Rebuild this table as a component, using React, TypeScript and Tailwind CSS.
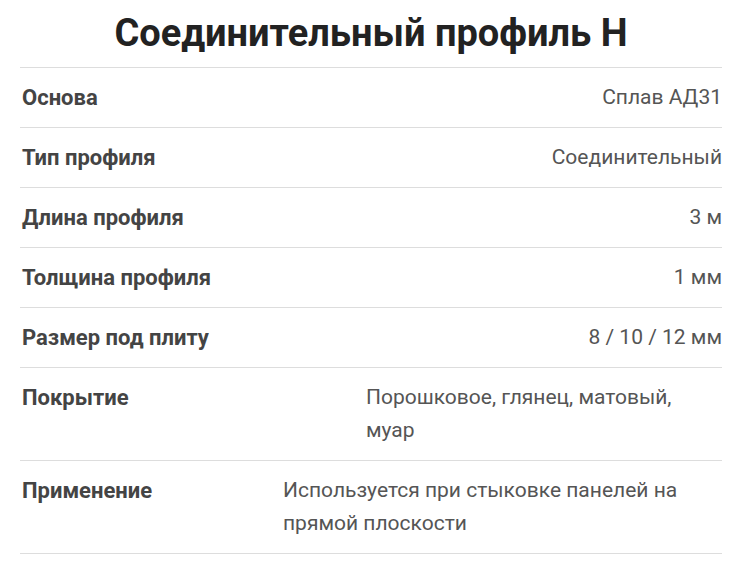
const rows: { label: string; value: string; width?: string }[] = [
  { label: 'Основа', value: 'Сплав АД31' },
  { label: 'Тип профиля', value: 'Соединительный' },
  { label: 'Длина профиля', value: '3 м' },
  { label: 'Толщина профиля', value: '1 мм' },
  { label: 'Размер под плиту', value: '8 / 10 / 12 мм' },
  { label: 'Покрытие', value: 'Порошковое, глянец, матовый, муар', width: 'w-[356px]' },
  { label: 'Применение', value: 'Используется при стыковке панелей на прямой плоскости', width: 'w-[439px]' },
];

export default function App() {
  return (
    <div className="min-h-screen bg-white pl-[20px] pr-[31px] font-['Roboto',sans-serif]">
      <h1 className="pt-[11px] pb-[12px] text-center text-[38px] leading-[44px] font-bold text-[#222]">
        Соединительный профиль Н
      </h1>
      <div className="border-b border-[#dddddd]">
        {rows.map((r) => (
          <div
            key={r.label}
            className="flex justify-between gap-4 border-t border-[#dddddd] py-[13px] text-[21px] leading-[33px]"
          >
            <div className="shrink-0 pl-[2px] text-[22px] font-bold text-[#444]">{r.label}</div>
            <div className={`${r.width ?? ''} text-[#555] ${r.width ? 'text-left' : 'text-right'}`}>{r.value}</div>
          </div>
        ))}
      </div>
    </div>
  );
}
